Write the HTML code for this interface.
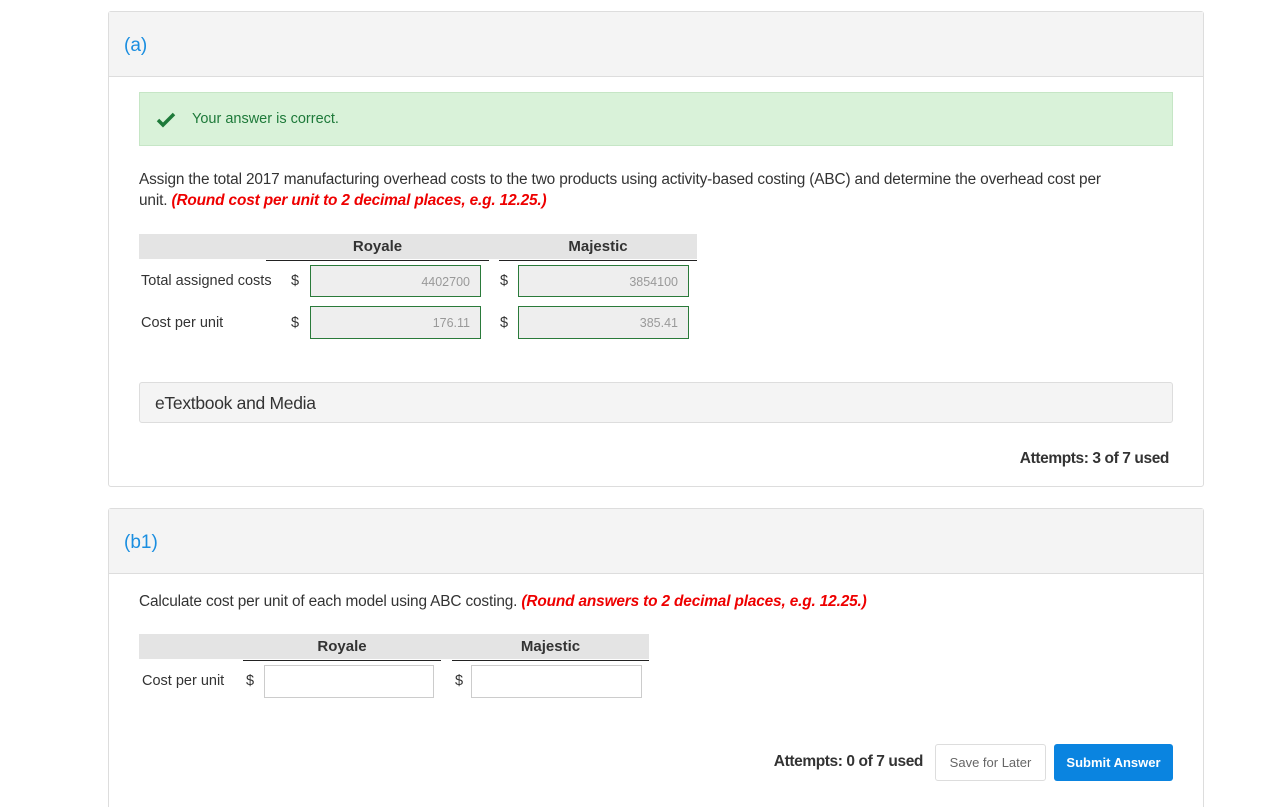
<!DOCTYPE html>
<html><head><meta charset="utf-8"><style>
html,body{margin:0;width:1263px;height:807px;overflow:hidden}
body{background:#fff;font-family:"Liberation Sans",sans-serif;color:#333;position:relative}
.a{position:absolute;white-space:nowrap}
.panel{position:absolute;border:1px solid #ddd;border-radius:3px;background:#fff}
.hdr{position:absolute;left:0;right:0;top:0;background:#f4f4f4;border-bottom:1px solid #ddd}
.lbl{color:#1a8ee0;font-size:19px}
.inp{position:absolute;height:31px;border:1px solid #2a7a3a;background:#eee;box-sizing:border-box;font-size:12.5px;color:#999;text-align:right;padding-right:10px;line-height:30px}
.inp2{position:absolute;height:33px;border:1px solid #ccc;background:#fff;box-sizing:border-box}
.th{position:absolute;background:#e4e4e4}
.ul{position:absolute;height:1px;background:#222}
.ch{font-size:15px;font-weight:bold;color:#333;text-align:center}
.t{font-size:14.5px;color:#333}
.red{color:#e00;font-weight:bold;font-style:italic}
</style></head><body>
<div class="panel" style="left:108px;top:11px;width:1094px;height:474px">
 <div class="hdr" style="height:64px"></div>
</div>
<div class="a lbl" style="left:124px;top:35px">(a)</div>
<div class="a" style="left:139px;top:92px;width:1032px;height:52px;background:#d9f2d9;border:1px solid #c6e6c6"></div>
<svg class="a" style="left:156px;top:112px" width="20" height="16" viewBox="0 0 20 16"><path d="M2 8 L7 13 L18 2" stroke="#1e7a3a" stroke-width="3.5" fill="none"/></svg>
<div class="a" style="left:192px;top:111px;font-size:14.5px;color:#1e7a3a">Your answer is correct.</div>
<div class="a" style="left:139px;top:171px;font-size:15.4px;letter-spacing:-0.15px">Assign the total 2017 manufacturing overhead costs to the two products using activity-based costing (ABC) and determine the overhead cost per</div>
<div class="a" style="left:139px;top:192px;font-size:15.4px;letter-spacing:-0.15px">unit. <span class="red">(Round cost per unit to 2 decimal places, e.g. 12.25.)</span></div>
<div class="th" style="left:139px;top:234px;width:558px;height:25px"></div>
<div class="ul" style="left:266px;top:260px;width:223px"></div>
<div class="ul" style="left:499px;top:260px;width:198px"></div>
<div class="a ch" style="left:266px;top:238px;width:223px">Royale</div>
<div class="a ch" style="left:499px;top:238px;width:198px">Majestic</div>
<div class="a t" style="left:141px;top:273px">Total assigned costs</div>
<div class="a t" style="left:141px;top:315px">Cost per unit</div>
<div class="a t" style="left:291px;top:273px">$</div><div class="a t" style="left:500px;top:273px">$</div>
<div class="a t" style="left:291px;top:315px">$</div><div class="a t" style="left:500px;top:315px">$</div>
<div class="inp" style="left:310px;top:265px;width:171px;height:32px;line-height:32px">4402700</div>
<div class="inp" style="left:518px;top:265px;width:171px;height:32px;line-height:32px">3854100</div>
<div class="inp" style="left:310px;top:306px;width:171px;height:33px;line-height:33px">176.11</div>
<div class="inp" style="left:518px;top:306px;width:171px;height:33px;line-height:33px">385.41</div>
<div class="a" style="left:139px;top:382px;width:1032px;height:39px;background:#f4f4f4;border:1px solid #ddd;border-radius:3px"></div>
<div class="a" style="left:155px;top:393px;font-size:17.5px;color:#333;letter-spacing:-0.3px">eTextbook and Media</div>
<div class="a" style="right:94px;top:450px;font-size:15.5px;font-weight:bold;color:#333;letter-spacing:-0.4px">Attempts: 3 of 7 used</div>

<div class="panel" style="left:108px;top:508px;width:1094px;height:320px">
 <div class="hdr" style="height:64px"></div>
</div>
<div class="a lbl" style="left:124px;top:532px">(b1)</div>
<div class="a" style="left:139px;top:593px;font-size:15.4px;letter-spacing:-0.15px">Calculate cost per unit of each model using ABC costing. <span class="red">(Round answers to 2 decimal places, e.g. 12.25.)</span></div>
<div class="th" style="left:139px;top:634px;width:510px;height:25px"></div>
<div class="ul" style="left:243px;top:660px;width:198px"></div>
<div class="ul" style="left:452px;top:660px;width:197px"></div>
<div class="a ch" style="left:243px;top:638px;width:198px">Royale</div>
<div class="a ch" style="left:452px;top:638px;width:197px">Majestic</div>
<div class="a t" style="left:142px;top:673px">Cost per unit</div>
<div class="a t" style="left:246px;top:673px">$</div><div class="a t" style="left:455px;top:673px">$</div>
<div class="inp2" style="left:264px;top:665px;width:170px"></div>
<div class="inp2" style="left:471px;top:665px;width:171px"></div>
<div class="a" style="right:340px;top:753px;font-size:15.5px;font-weight:bold;color:#333;letter-spacing:-0.4px">Attempts: 0 of 7 used</div>
<div class="a" style="left:935px;top:744px;width:109px;height:35px;border:1px solid #ddd;border-radius:3px;font-size:13px;color:#666;text-align:center;line-height:36px">Save for Later</div>
<div class="a" style="left:1054px;top:744px;width:119px;height:37px;background:#0a84e0;border-radius:3px;font-size:13px;color:#fff;font-weight:bold;text-align:center;line-height:38px">Submit Answer</div>
</body></html>
